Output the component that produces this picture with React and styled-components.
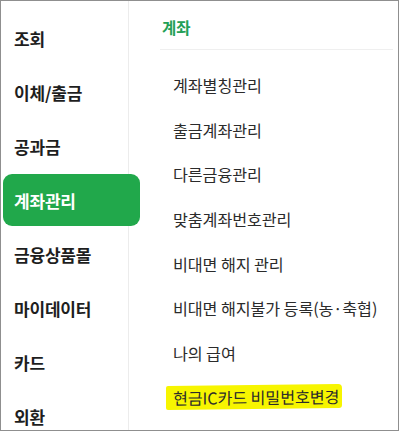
import React from "react";
import styled, { createGlobalStyle } from "styled-components";

const Global = createGlobalStyle`
  html, body { margin: 0; padding: 0; background: #fff; }
  body { font-family: "Noto Sans CJK KR", "Noto Sans", sans-serif; }
  * { box-sizing: border-box; }
`;

const Frame = styled.div`
  width: 399px;
  height: 431px;
  border: 1px solid #8f8f8f;
  display: flex;
  overflow: hidden;
  background: #fff;
`;

const Sidebar = styled.ul`
  list-style: none;
  margin: 0;
  padding: 10px 0 0 0;
  width: 128px;
  flex: none;
  border-right: 1px solid #ececec;
  display: flex;
  flex-direction: column;
`;

const NavItem = styled.li`
  height: ${(p) => (p.$active ? "52px" : "54px")};
  margin: ${(p) => (p.$active ? "1px -12px 1px 2px" : "0")};
  padding-left: ${(p) => (p.$active ? "11px" : "13px")};
  display: flex;
  align-items: center;
  font-size: 17px;
  font-weight: 700;
  letter-spacing: -0.2px;
  color: ${(p) => (p.$active ? "#fff" : "#1e1e1e")};
  background: ${(p) => (p.$active ? "#21a84b" : "transparent")};
  border-radius: ${(p) => (p.$active ? "9px" : "0")};
  position: relative;
  flex: none;
`;

const Main = styled.section`
  flex: 1;
  padding: 0 5px 0 31px;
  display: flex;
  flex-direction: column;
`;

const Header = styled.div`
  height: 49px;
  padding-left: 2px;
  padding-top: 15px;
  border-bottom: 1px solid #efefef;
  font-size: 15.5px;
  font-weight: 700;
  color: #23a055;
  line-height: 22px;
`;

const List = styled.ul`
  list-style: none;
  margin: 0;
  padding: 13px 0 0 13px;
`;

const Item = styled.li`
  height: 44.6px;
  display: flex;
  align-items: center;
  font-size: 16.2px;
  color: #2b2b2b;
  letter-spacing: -0.1px;
  white-space: nowrap;
`;

const Marker = styled.span`
  background: #f7f500;
  margin-left: -7px;
  padding: 0 3px 0 7px;
  border-radius: 2px 4px 3px 2px;
  transform: skewY(-0.6deg);
  display: inline-block;
`;

const nav = ["조회", "이체/출금", "공과금", "계좌관리", "금융상품몰", "마이데이터", "카드", "외환"];
const items = [
  "계좌별칭관리",
  "출금계좌관리",
  "다른금융관리",
  "맞춤계좌번호관리",
  "비대면 해지 관리",
  "비대면 해지불가 등록(농·축협)",
  "나의 급여",
];

export default function App() {
  return (
    <>
      <Global />
      <Frame>
        <Sidebar>
          {nav.map((n) => (
            <NavItem key={n} $active={n === "계좌관리"}>
              {n}
            </NavItem>
          ))}
        </Sidebar>
        <Main>
          <Header>계좌</Header>
          <List>
            {items.map((t) => (
              <Item key={t}>{t}</Item>
            ))}
            <Item>
              <Marker>현금IC카드 비밀번호변경</Marker>
            </Item>
          </List>
        </Main>
      </Frame>
    </>
  );
}
